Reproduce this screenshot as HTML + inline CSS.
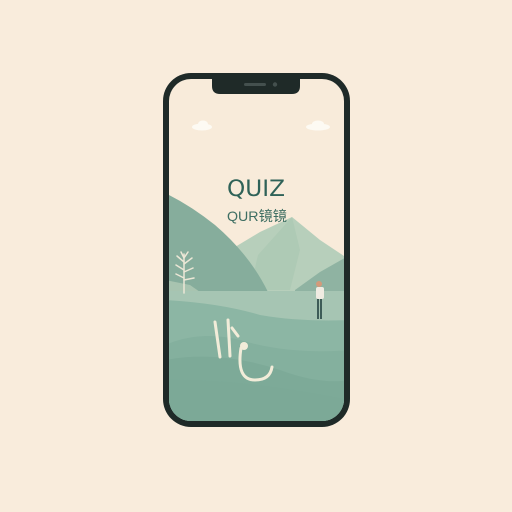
<!DOCTYPE html>
<html><head><meta charset="utf-8"><style>
html,body{margin:0;padding:0;background:#f9ecdc;width:512px;height:512px;overflow:hidden}
</style></head><body>
<svg width="512" height="512" viewBox="0 0 512 512" xmlns="http://www.w3.org/2000/svg">
<rect width="512" height="512" fill="#f9ecdc"/>
<rect x="163" y="73" width="187" height="354" rx="28" fill="#1f2a28"/>
<clipPath id="c"><rect x="169" y="79" width="175" height="342" rx="22"/></clipPath>
<g clip-path="url(#c)">
<rect x="160" y="70" width="200" height="360" fill="#f8ebda"/>
<ellipse cx="202" cy="127" rx="10" ry="3.5" fill="#fdfaf3"/><ellipse cx="203" cy="124" rx="5" ry="3.5" fill="#fdfaf3"/>
<ellipse cx="318" cy="127" rx="12" ry="3.5" fill="#fdfaf3"/><ellipse cx="318" cy="124" rx="6" ry="3.5" fill="#fdfaf3"/>
<path d="M230 250 L260 232 L292 217 L320 240 L350 260 L350 300 L230 300Z" fill="#b7cfbb"/>
<path d="M258 255 L292 217 L300 250 L290 290 L250 290Z" fill="#a9c6b1" opacity=".6"/>
<path d="M295 290 L320 272 L350 255 L350 300 L295 300Z" fill="#8fb3a2"/>
<path d="M165 193 Q190 205 215 225 Q250 255 268 292 L165 292Z" fill="#86ad9c"/>
<path d="M165 280 L190 285 L200 292 L165 292Z" fill="#a8c4b0"/>
<rect x="165" y="291" width="190" height="140" fill="#a6c5b3"/>
<path d="M165 300 Q220 303 260 315 Q300 322 350 320 L350 430 L165 430Z" fill="#8cb6a4"/>
<path d="M165 345 Q200 330 240 340 Q290 355 350 350 L350 430 L165 430Z" fill="#84b09e"/>
<path d="M165 360 Q220 350 280 370 Q320 385 350 380 L350 430 L165 430Z" fill="#7daa98"/>
<path d="M165 380 Q240 378 350 400 L350 430 L165 430Z" fill="#7ca997"/>
<g stroke="#ece7d6" stroke-width="1.5" fill="none" stroke-linecap="round">
<path d="M184 293 L184 254"/><path d="M184 262 L177 256 M184 270 L176 265 M184 278 L176 274 M184 264 L192 258 M184 272 L193 268 M184 280 L194 278 M184 258 L181 252 M184 258 L188 252"/>
</g>
<rect x="317" y="297" width="2" height="22" fill="#3d5c57"/><rect x="320" y="297" width="2" height="22" fill="#3d5c57"/>
<rect x="316" y="287" width="8" height="12" rx="2" fill="#f0ece2"/>
<circle cx="319" cy="284" r="3" fill="#d49a7a"/>
<g stroke="#f2ecd9" stroke-width="3" fill="none" stroke-linecap="round">
<path d="M215 322 L220 357"/><path d="M228 320 L230 356"/><path d="M232 328 L238 336"/>
<path d="M241 348 Q236 380 255 380 Q270 380 272 367"/>
</g>
<circle cx="244" cy="346" r="4" fill="#f2ecd9"/>
</g>
<path d="M212 79 L300 79 L300 86 Q300 94 292 94 L220 94 Q212 94 212 86Z" fill="#1f2a28"/>
<rect x="244" y="83" width="22" height="3" rx="1.5" fill="#44504e"/>
<circle cx="275" cy="84.5" r="2.2" fill="#44504e"/>
<text x="256" y="196" text-anchor="middle" font-family="DejaVu Sans, sans-serif" font-size="22" fill="#2f6258" textLength="58" lengthAdjust="spacingAndGlyphs">QUIZ</text>
<text x="257" y="221" text-anchor="middle" font-family="Liberation Sans, 'Noto Sans CJK SC', sans-serif" font-size="14" fill="#3e6e62" textLength="60" lengthAdjust="spacingAndGlyphs">QUR镜镜</text>
</svg>
</body></html>
